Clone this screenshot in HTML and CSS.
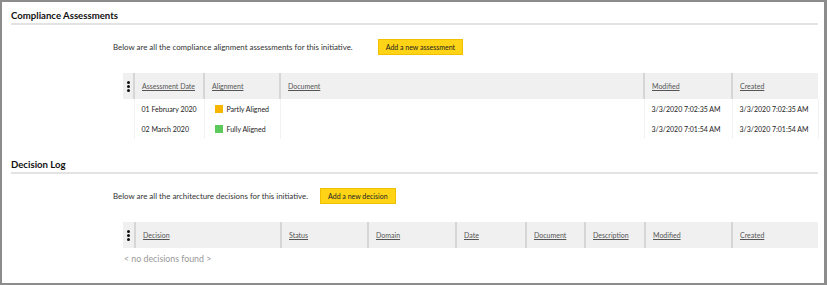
FILE: index.html
```html
<!DOCTYPE html>
<html lang="en">

<head>
    <meta charset="utf-8">
    <meta name="viewport" content="width=device-width, initial-scale=1.0">
    <title>Initiative - Compliance and Decisions</title>
    <link rel="stylesheet" href="styles.css">
</head>

<body>
    <div class="ramme">
        <section class="blok">
            <h2 class="overskrift">Compliance Assessments</h2>
            <div class="intro">
                <p>Below are all the compliance alignment assessments for this initiative.</p>
                <button class="knap">Add a new assessment</button>
            </div>
            <table class="liste">
                <colgroup>
                    <col style="width: 11px">
                    <col style="width: 70px">
                    <col style="width: 76px">
                    <col style="width: 364px">
                    <col style="width: 88px">
                    <col style="width: 86px">
                </colgroup>
                <thead>
                    <tr>
                        <th class="greb"><span class="prikker"><i></i><i></i><i></i></span></th>
                        <th><a href="#">Assessment Date</a></th>
                        <th><a href="#">Alignment</a></th>
                        <th><a href="#">Document</a></th>
                        <th><a href="#">Modified</a></th>
                        <th><a href="#">Created</a></th>
                    </tr>
                </thead>
                <tbody>
                    <tr>
                        <td class="greb"></td>
                        <td>01 February 2020</td>
                        <td><span class="status delvis"></span>Partly Aligned</td>
                        <td></td>
                        <td>3/3/2020 7:02:35 AM</td>
                        <td>3/3/2020 7:02:35 AM</td>
                    </tr>
                    <tr>
                        <td class="greb"></td>
                        <td>02 March 2020</td>
                        <td><span class="status fuld"></span>Fully Aligned</td>
                        <td></td>
                        <td>3/3/2020 7:01:54 AM</td>
                        <td>3/3/2020 7:01:54 AM</td>
                    </tr>
                </tbody>
            </table>
        </section>

        <section class="blok anden">
            <h2 class="overskrift">Decision Log</h2>
            <div class="intro tæt">
                <p>Below are all the architecture decisions for this initiative.</p>
                <button class="knap">Add a new decision</button>
            </div>
            <table class="liste">
                <colgroup>
                    <col style="width: 12px">
                    <col style="width: 146px">
                    <col style="width: 87px">
                    <col style="width: 88px">
                    <col style="width: 70px">
                    <col style="width: 59px">
                    <col style="width: 60px">
                    <col style="width: 87px">
                    <col style="width: 86px">
                </colgroup>
                <thead>
                    <tr>
                        <th class="greb"><span class="prikker"><i></i><i></i><i></i></span></th>
                        <th><a href="#">Decision</a></th>
                        <th><a href="#">Status</a></th>
                        <th><a href="#">Domain</a></th>
                        <th><a href="#">Date</a></th>
                        <th><a href="#">Document</a></th>
                        <th><a href="#">Description</a></th>
                        <th><a href="#">Modified</a></th>
                        <th><a href="#">Created</a></th>
                    </tr>
                </thead>
            </table>
            <p class="tom">&lt; no decisions found &gt;</p>
        </section>
    </div>
</body>

</html>
```

FILE: styles.css
```css
body {
    margin: 0;
    font-family: Lato, "Liberation Sans", sans-serif;
    color: #222;
}

.ramme {
    width: 827px;
    height: 285px;
    box-sizing: border-box;
    border: 2px solid #8c8c8c;
    border-right-width: 3px;
    background: #fff;
    overflow: hidden;
}

.blok {
    margin: 0;
}

.anden {
    margin-top: 12px;
}

.overskrift {
    margin: 0 6px 0 9px;
    padding: 8px 0 1px;
    font-size: 9.6px;
    line-height: 12px;
    font-weight: bold;
    color: #111;
    border-bottom: 2px solid #e3e3e3;
}

.intro {
    display: flex;
    align-items: center;
    gap: 25px;
    margin: 14px 0 0 111px;
    height: 16px;
}

.intro.tæt {
    gap: 12px;
}

.intro p {
    margin: 0;
    font-size: 7.9px;
    color: #333;
}

.knap {
    height: 16px;
    padding: 0 7px;
    font-family: inherit;
    font-size: 7px;
    color: #222;
    background: #ffd416;
    border: 1px solid #f0c000;
    border-radius: 0;
    cursor: pointer;
}

.liste {
    margin: 18px 0 0 121px;
    width: 695px;
    table-layout: fixed;
    border-collapse: collapse;
    font-size: 7px;
}

.liste th {
    height: 26px;
    padding: 0 0 0 7px;
    background: #f0f0f0;
    border-left: 2px solid #d6d6d6;
    text-align: left;
    font-weight: normal;
}

.liste th.greb {
    border-left: none;
    padding: 0;
    text-align: center;
}

.liste th a {
    color: #555;
    text-decoration: underline;
}

.liste td {
    height: 20px;
    padding: 0 0 0 7px;
    border-left: 1px solid #f2f2f2;
    white-space: nowrap;
    color: #222;
}

.liste td.greb {
    border-left: none;
    padding: 0;
}

.liste tbody tr td:last-child {
    border-right: 1px solid #f2f2f2;
}

.prikker {
    display: inline-flex;
    flex-direction: column;
    gap: 1px;
    vertical-align: middle;
}

.prikker i {
    display: block;
    width: 3px;
    height: 3px;
    border-radius: 50%;
    background: #111;
}

.status {
    display: inline-block;
    width: 8px;
    height: 8px;
    margin: 0 4px 0 3px;
    vertical-align: -1px;
}

.delvis {
    background: #f7b500;
}

.fuld {
    background: #5cc95c;
}

.tom {
    margin: 5px 0 0 122px;
    font-size: 8.8px;
    line-height: 12px;
    color: #999;
}
```
